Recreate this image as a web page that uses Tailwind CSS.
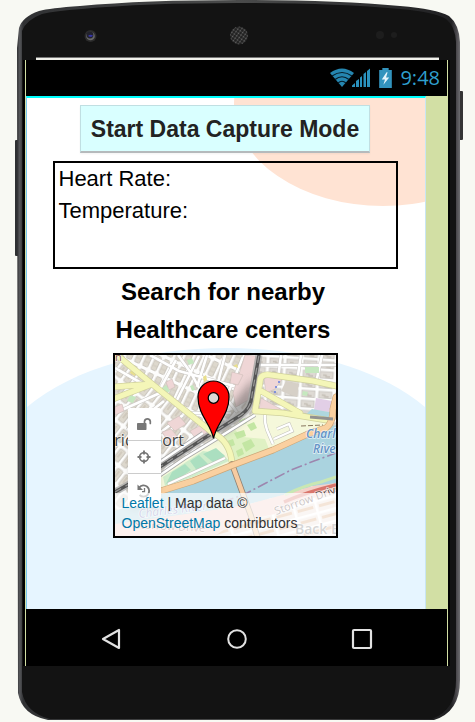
<!DOCTYPE html>
<html lang="en">
<head>
<meta charset="utf-8">
<meta name="viewport" content="width=device-width, initial-scale=1">
<title>Health Monitor</title>
<script src="https://cdn.jsdelivr.net/npm/@tailwindcss/browser@4"></script>
</head>
<body class="bg-[#f8f9f3] font-['Liberation_Sans',Arial,sans-serif] text-black">
<div class="relative flex min-h-screen flex-col overflow-hidden">

  <!-- Handset body -->
  <svg class="absolute inset-0 h-full w-full" viewBox="0 0 475 722" preserveAspectRatio="none" aria-hidden="true">
    <defs>
      <linearGradient id="edge" x1="17" x2="461" y1="0" y2="0" gradientUnits="userSpaceOnUse">
        <stop offset="0" stop-color="#303032"/><stop offset=".006" stop-color="#56575a"/><stop offset=".014" stop-color="#303133"/>
        <stop offset=".5" stop-color="#4a4b4b"/><stop offset=".978" stop-color="#202022"/><stop offset=".99" stop-color="#4b494d"/><stop offset="1" stop-color="#77777a"/>
      </linearGradient>
      <pattern id="mesh" width="3" height="3" patternUnits="userSpaceOnUse" patternTransform="rotate(35)"><rect width="3" height="3" fill="#1c1c1c"/><circle cx="1.5" cy="1.5" r=".9" fill="#696969"/></pattern>
    </defs>
    <rect x="15" y="140" width="5" height="116" rx="1" fill="#2e3032"/>
    <rect x="458" y="91" width="5" height="49" rx="1" fill="#343434"/>
    <path d="M17 48 L19 28 Q22 17 39 11 Q50 8 80 6 Q145 0 239 0 Q335 0 400 6 Q436 9 449 16 Q459 24 460 42 L460 680 Q460 712 434 720 L48 720 Q22 715 18 693 Z" fill="url(#edge)"/>
    <path d="M22 48 L22 31 Q26 20 42 14 Q55 11 82 9 Q145 3 239 3 Q335 3 400 9 Q434 12 446 19 Q455 26 456 42 L456 680 Q456 710 432 719 L50 719 Q26 713 22 692 Z" fill="#131313"/>
    <path d="M23 60H450V666H23Z" fill="#000"/>
    <circle cx="90.500" cy="36" r="6" fill="#2b2b2b"/><circle cx="90.500" cy="36" r="4.300" fill="#686868"/><circle cx="90" cy="35" r="3.400" fill="#22222c"/><path d="M88 36Q90 34 93 35.500Q92 38 88 36Z" fill="#3636a6"/>
    <circle cx="239" cy="35.500" r="9" fill="url(#mesh)"/>
    <circle cx="380" cy="35" r="4" fill="#1d1d1d"/><circle cx="394" cy="35" r="3" fill="#1d1d1d"/>
  </svg>

  <div class="relative flex h-[60px] shrink-0 flex-col justify-end pr-9 pl-9">
    <div class="h-[3px] border-t border-[#777] bg-[#f0f0ea]"></div>
  </div>

  <div class="relative mr-[27px] ml-[25px] flex flex-col border-x border-[#d2dfa4] bg-black">
    <header class="flex h-9 items-center justify-end gap-2 pr-[7px] text-[#2f9fce]">
      <svg class="h-5 w-[41px]" viewBox="0 0 41 20" role="img" aria-label="Wi-Fi and mobile signal">
        <path d="M0 5Q12-4 24 5L12 19Z" fill="#2586b0"/>
        <path d="M2 8Q12 1 22 8M5 11.500Q12 6 19 11.500M8 15Q12 11.500 16 15" fill="none" stroke="#061c28" stroke-width="1.200"/>
        <path d="M22 19V17.500L25 15V19ZM26 19V13L29 11V19ZM30 19V9.500L32 8V19ZM33.500 19V6L36 4V19ZM37 19V3L40 .500V19Z" fill="#2a91bd"/>
      </svg>
      <svg class="h-5 w-[13px]" viewBox="4 0 12 19" role="img" aria-label="Battery charging">
        <path d="M4 2H7V0H13V2H16V19H4Z" fill="#3293bd"/><path d="M11 4L6.500 11H9.500L8 16L13.500 9H10.500L12 4Z" fill="#e4f4fb"/>
      </svg>
      <time class="font-['Open_Sans','Noto_Sans',sans-serif] text-xl leading-6">9:48</time>
    </header>

    <div class="bg-[#d2dfa4] pr-[21px]">
      <main class="relative flex h-[513px] flex-col items-center border-t-2 border-r border-l border-t-[#00ffff] border-r-[#c9e5f2] border-l-[#79c7f0] bg-white pr-0.5">
        <svg class="absolute inset-0 h-full w-full" viewBox="0 0 398 511" preserveAspectRatio="none" aria-hidden="true">
          <ellipse cx="356" cy="6" rx="149" ry="102" fill="#ffe3d3"/>
          <path d="M0 309C48 269 123 250 199 250S350 269 398 309V511H0Z" fill="#e6f5ff"/>
        </svg>

        <button type="button" class="relative mt-[7px] h-12 border border-b-2 border-[#c0dfe2] border-b-[#b5babc] bg-[#d9ffff] px-2.5 text-[23px] leading-6 font-bold text-[#222] shadow-xs">Start Data Capture Mode</button>

        <section class="relative mt-2 h-[108px] w-[345px] max-w-full border-2 border-black px-1 text-[22px] leading-8" aria-label="Readings">
          <p>Heart Rate:</p>
          <p>Temperature:</p>
        </section>

        <h2 class="relative mt-1 w-56 pr-1 text-center text-2xl leading-[38px] font-bold">Search for nearby Healthcare centers</h2>

        <section class="relative mt-1 h-[185px] w-[225px] overflow-hidden border-2 border-black bg-[#f2efe9]" aria-label="Map">
          <svg class="absolute inset-0 h-full w-full" viewBox="0 0 221 181" preserveAspectRatio="xMidYMid slice" aria-hidden="true">
            <defs>
              <pattern id="blocksA" width="19" height="9" patternUnits="userSpaceOnUse" patternTransform="rotate(-65)">
                <rect width="19" height="9" fill="#fdfdfc"/><rect x="2.500" y="2" width="15" height="5.500" rx="1" fill="#ddd8cd" stroke="#c3beb6" stroke-width=".8"/><path d="M7 2.500V7M12 2.500V7" stroke="#c9c1b6" stroke-width=".7"/>
              </pattern>
              <pattern id="blocksB" width="17" height="10" patternUnits="userSpaceOnUse" patternTransform="rotate(-52)">
                <rect width="17" height="10" fill="#fdfdfc"/><rect x="2" y="2" width="13" height="6.500" rx="1" fill="#ded9ce" stroke="#c3beb6" stroke-width=".8"/><path d="M6 5H13" stroke="#c4bbaf" stroke-width="1"/>
              </pattern>
              <pattern id="blocksC" width="17" height="10" patternUnits="userSpaceOnUse" patternTransform="rotate(4)">
                <rect width="17" height="10" fill="#fdfdfc"/><rect x="2" y="2" width="13" height="6.500" fill="#dedad4" stroke="#c5c2bd" stroke-width=".8"/><path d="M5 5.500H8V7H12" fill="none" stroke="#c5bfb6" stroke-width="1.300"/>
              </pattern>
              <pattern id="blocksD" width="22" height="12" patternUnits="userSpaceOnUse" patternTransform="rotate(-15)">
                <rect width="22" height="12" fill="#eee2d9"/><path d="M0 1H22M1 0V12" stroke="#fff" stroke-width="3"/><path d="M4 6.500H20" stroke="#dba97e" stroke-width="3"/>
              </pattern>
              <filter id="soft" x="-30%" y="-30%" width="160%" height="160%"><feGaussianBlur stdDeviation="4"/></filter>
            </defs>
            <rect width="221" height="181" fill="url(#blocksB)"/>
            <path d="M8 0H145V30L96 74L37 30Z" fill="url(#blocksA)"/>
            <path d="M139 0H221V70L142 61Z" fill="url(#blocksC)"/>
            <!-- streets -->
            <g fill="none" stroke="#c9c7c3" stroke-width="3.600"><path d="M35 0L64 16L119 31L135 40M63 0L76 18L91 46M92 0L82 32M110 0L96 55M128 2L111 43L122 57M45 34L61 5M62 45L84 1M74 58H116M0 13L28 29M0 58L45 38M12 75L49 46M24 94L68 60M166 0L163 24M186 0L182 27M207 0L201 28M145 10H221"/></g>
            <g fill="none" stroke="#fff" stroke-width="2.600"><path d="M35 0L64 16L119 31L135 40M63 0L76 18L91 46M92 0L82 32M110 0L96 55M128 2L111 43L122 57M45 34L61 5M62 45L84 1M74 58H116M0 13L28 29M0 58L45 38M12 75L49 46M24 94L68 60M166 0L163 24M186 0L182 27M207 0L201 28M145 10H221"/></g>
            <!-- industrial areas -->
            <g fill="#efd6d6" stroke="#cdbdb9" stroke-width=".6">
              <path d="M130 0L141 1L133 45L121 52L118 38Z"/><path d="M117 17L128 20L123 30L115 28Z"/><path d="M149 24Q156 19 168 23L160 34L151 38Z"/><path d="M52 68L64 61L71 69L60 76Z"/><path d="M75 76L88 69L93 78L83 87Z"/><path d="M47 77L56 74L63 82L54 88Z"/><path d="M146 43L169 56L144 54Z"/><path d="M51 27L57 24L60 32L54 35Z"/><path d="M0 52L7 49L9 56L0 60Z"/>
            </g>
            <g fill="#c5e8bf"><path d="M46 34L51 30L55 36L49 40Z"/><path d="M15 40L21 42L18 48L12 46Z"/><path d="M72 5L77 3L79 8L74 10Z"/><path d="M190 12H204V18H190Z"/><path d="M75 31L78 30L80 35L77 36Z"/><path d="M188 36L193 37L192 41L187 40Z"/></g>
            <g fill="#e9df8c"><path d="M17 13L22 15L20 21L15 18Z"/><path d="M88 22L91 20L92 25L89 27Z"/><path d="M118 11L122 9L123 13Z"/></g>
            <g fill="#627be0"><circle cx="164" cy="27" r="1"/><circle cx="161" cy="32" r="1"/><circle cx="160" cy="37" r="1"/></g>
            <path d="M171 26L184 29L182 42L166 36Z" fill="#d6d0c7"/>
            <path d="M201 43L217 46L214 57L199 55Z" fill="#e2cfe6"/>
            <path d="M197 54L219 58V64L190 60Z" fill="#aed7df"/>
            <!-- parks -->
            <path d="M101 82L138 58L190 62L214 68L198 77L158 95L118 110L78 126L46 137L37 127L88 92Z" fill="#f5f8db"/>
            <path d="M104 84L120 75L128 82L150 84L154 94L119 108Z" fill="#dff1c3"/>
            <path d="M48 122L88 96L108 99L114 106L78 122L50 131Z" fill="#cfeccb"/>
            <g fill="#abdfc0"><path d="M57 117L70 109L76 115L62 125L51 129Z"/><path d="M75 106L84 100L94 110L83 117Z"/><path d="M88 99L101 93L110 101L99 108Z"/></g>
            <g fill="#c3e6a3"><path d="M119 78L129 75L131 81L122 84Z"/><path d="M132 70L139 67L142 73L136 76Z"/><path d="M127 88L136 84L140 91L131 97Z"/><path d="M112 86L118 84L120 90L115 92Z"/><path d="M121 96L127 93L129 99L123 102Z"/><path d="M124 66L130 63L132 68L127 70Z"/></g>
            <g fill="none" stroke="#c4c3bc" stroke-width="3.500"><path d="M150 58Q149 66 152 75L158 89M159 84L177 76L174 69L162 74M53 129L110 103"/></g>
            <g fill="none" stroke="#fff" stroke-width="2.400"><path d="M150 58Q149 66 152 75L158 89M159 84L177 76L174 69L162 74M53 129L110 103"/></g>
            <!-- river -->
            <path d="M36 143L78 127L118 111L158 97L196 79L221 70V130L198 131L168 140L131 150L85 158L30 170H0V156Z" fill="#aad3df"/>
            <path d="M0 169L85 157L131 150L168 140L198 131L221 128V181H0Z" fill="#f4d0c8"/>
            <path d="M100 181L118 168L160 159L190 145L221 137V181Z" fill="url(#blocksD)"/>
            <path d="M170 140Q190 130 206 127L221 122" fill="none" stroke="#c9e7b3" stroke-width="3"/>
            <path d="M169 147Q192 137 221 130" fill="none" stroke="#d9766c" stroke-width="3.500"/>
            <path d="M108 147L130 139L151 128L176 115L199 106L221 98" fill="none" stroke="#9d86ae" stroke-width="1.600" stroke-dasharray="11 3 2 3"/>
            <path d="M96 84L112 56L140 22L138 52L120 70Z" fill="#555" opacity=".5" filter="url(#soft)"/>
            <!-- railway -->
            <path d="M0 137L48 110L88 84L126 60Q136 53 137 40L144 0" fill="none" stroke="#a6a6a6" stroke-width="7" opacity=".7"/>
            <path d="M0 137L48 110L88 84L126 60Q136 53 137 40L144 0" fill="none" stroke="#555" stroke-width="3.400"/>
            <path d="M0 137L48 110L88 84L126 60Q136 53 137 40L144 0" fill="none" stroke="#999" stroke-width="1.200" stroke-dasharray="7 5"/>
            <g fill="none"><path d="M32 129L70 103L98 86L140 60M42 109L88 78" stroke="#aaa" stroke-width="4"/><path d="M32 129L70 103L98 86L140 60M42 109L88 78" stroke="#fff" stroke-width="2.400"/></g>
            <!-- major roads -->
            <g fill="none" stroke-linejoin="round" stroke-linecap="round">
              <path d="M3 1L37 29L98 78Q115 86 117 108M-2 32L37 29L-2 44M221 31L198 26L156 20Q145 18 145 27L140 56L168 58L211 65M146 36L185 58" stroke="#cfd09c" stroke-width="6.500"/>
              <path d="M3 1L37 29L98 78Q115 86 117 108M-2 32L37 29L-2 44M221 31L198 26L156 20Q145 18 145 27L140 56L168 58L211 65M146 36L185 58" stroke="#f4f6b8" stroke-width="5.200"/>
              <path d="M117 109L136 161L143 184" stroke="#8f8072" stroke-width="6"/><path d="M117 109L136 161L143 184" stroke="#f6cba1" stroke-width="4.400"/>
              <path d="M36 139L78 126L118 110L158 95L195 78L211 73Q218 68 218 54L221 42" stroke="#cba577" stroke-width="6.800"/>
              <path d="M36 139L78 126L118 110L158 95L195 78L211 73Q218 68 218 54L221 42" stroke="#fad0a0" stroke-width="5.600"/>
            </g>
            <path d="M195 62L218 64" stroke="#929290" stroke-width="3"/><path d="M186 71L208 70" stroke="#88775f" stroke-width="1" stroke-dasharray="5 2"/>
            <!-- place names -->
            <g font-family="'Open Sans','Noto Sans',sans-serif" stroke="#fff" stroke-opacity=".7" stroke-width="1.500" paint-order="stroke" stroke-linejoin="round">
              <text x="69" y="91" font-size="16" text-anchor="end" fill="#444">Cambridgeport</text>
              <text font-size="12" font-style="italic" font-weight="600" fill="#6493c6"><tspan x="191" y="83">Charles</tspan><tspan x="198" y="98">River</tspan></text>
              <text x="24" y="163" font-size="12" font-style="italic" fill="#7776b8" transform="rotate(-7 24 163)">Charles River</text>
              <text x="90" y="177" font-size="11" text-anchor="end" fill="#8f5752" transform="rotate(3 90 177)">Storrow Drive</text>
              <text x="161" y="160" font-size="11" fill="#54423f" transform="rotate(-20 161 160)">Storrow Drive</text>
              <text x="180" y="179" font-size="14" font-weight="600" fill="#777">Back Bay</text>
              <text x="0" y="6" font-size="11" fill="#8a584d">n</text>
            </g>
          </svg>

          <svg class="absolute top-[25px] left-[81px] h-[60px] w-[35px]" viewBox="0 0 35 60" role="img" aria-label="Current location">
            <path d="M17.500 58.500C15 44 2 35 2 17A15.500 16 0 0 1 33 17C33 35 20 44 17.500 58.500Z" fill="#f00" stroke="#000" stroke-width="1.200"/>
            <circle cx="17.500" cy="18" r="5.300" fill="#ddd7d6" stroke="#000" stroke-width="1.200"/>
          </svg>

          <div class="absolute top-[53px] left-[13px] flex w-[33px] flex-col divide-y divide-[#ccc] rounded-xs bg-white text-[#777] shadow-md">
            <button type="button" class="flex h-[33px] items-center justify-center" aria-label="Unlock map">
              <svg class="h-4 w-4" viewBox="0 0 16 16" aria-hidden="true"><rect x="1" y="7" width="9.500" height="7" rx=".7" fill="currentColor"/><path d="M8.500 7V5.200A3 3 0 0 1 14.300 5.200V7.500" fill="none" stroke="currentColor" stroke-width="1.700" stroke-linecap="round"/></svg>
            </button>
            <button type="button" class="flex h-[33px] items-center justify-center" aria-label="Centre on location">
              <svg class="h-4 w-4" viewBox="0 0 16 16" fill="none" stroke="currentColor" aria-hidden="true"><circle cx="8" cy="8" r="4.400" stroke-width="1.600"/><path d="M8 1.500V5.500M8 10.500V14.500M1.500 8H5.500M10.500 8H14.500" stroke-width="1.900"/></svg>
            </button>
            <button type="button" class="flex h-[33px] items-center justify-center" aria-label="Reset view">
              <svg class="h-4 w-4" viewBox="0 0 16 16" fill="none" stroke="currentColor" aria-hidden="true"><path d="M3.200 4.500A5.600 5.600 0 1 1 3.600 12" stroke-width="1.800"/><path d="M1.500 1.500V7H7Z" fill="currentColor" stroke="none"/><path d="M8.500 5V8.700H6" stroke-width="1.300"/></svg>
            </button>
          </div>

          <p class="absolute inset-x-0 bottom-0 bg-white/70 px-[7px] pb-[3px] text-sm leading-5 text-[#333]"><a href="#leaflet" class="text-[#0078a8]">Leaflet</a> | Map data © <a href="#osm" class="text-[#0078a8]">OpenStreetMap</a> contributors</p>
        </section>
      </main>
    </div>

    <nav class="flex h-[57px] items-center justify-between px-[73px] text-[#e2e2e2]" aria-label="System">
      <button type="button" aria-label="Back"><svg class="h-6 w-6" viewBox="0 0 24 24" aria-hidden="true"><path d="M4 13L20 4V22Z" fill="none" stroke="currentColor" stroke-width="2.200" stroke-linejoin="round"/></svg></button>
      <button type="button" aria-label="Home"><svg class="h-6 w-6" viewBox="0 0 24 24" aria-hidden="true"><circle cx="12" cy="13" r="8.800" fill="none" stroke="currentColor" stroke-width="2"/></svg></button>
      <button type="button" aria-label="Recent apps"><svg class="h-6 w-6" viewBox="0 0 24 24" aria-hidden="true"><rect x="3" y="4" width="18" height="18" rx="1" fill="none" stroke="currentColor" stroke-width="2.200"/></svg></button>
    </nav>
  </div>
</div>
</body>
</html>
